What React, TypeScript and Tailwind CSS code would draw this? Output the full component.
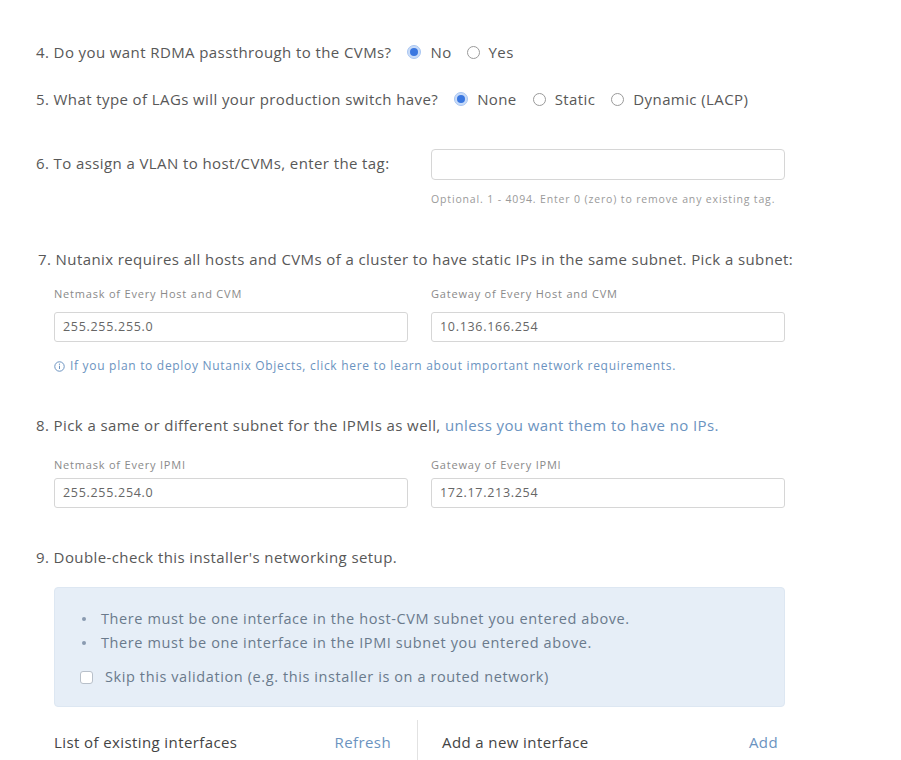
import React from "react";

const font = { fontFamily: "'Open Sans', Lato, Arial, sans-serif" };

function Radio({ checked, label }: { checked?: boolean; label: string }) {
  return (
    <span className="inline-flex items-center gap-[9px]">
      {checked ? (
        <span className="w-[14px] h-[14px] rounded-full bg-[#c9dcf8] border border-[#a9c6f2] flex items-center justify-center">
          <span className="w-[8px] h-[8px] rounded-full bg-[#3a77e0]" />
        </span>
      ) : (
        <span className="w-[13px] h-[13px] rounded-full border border-[#9a9a9a] bg-white" />
      )}
      <span>{label}</span>
    </span>
  );
}

function Field({ label }: { label: string }) {
  return (
    <div className="w-[354px]">
      <div className="text-[11px] leading-[14px] tracking-[0.8px] text-[#8a8a8a] h-[14px]">{label}</div>
    </div>
  );
}

function Input({ value }: { value: string }) {
  return (
    <div className="w-[354px] h-[30px] rounded-[3px] border border-[#d6d6d6] bg-white flex items-center pl-[8px] text-[12.5px] tracking-[0.7px] text-[#666]">
      {value}
    </div>
  );
}

export default function App() {
  return (
    <div className="w-[901px] h-[760px] bg-white overflow-hidden text-[#585858] tracking-[0.4px]" style={font}>
      <div className="pl-[36px]">
        <div className="pt-[42px] h-[62px] flex items-center gap-[16px] text-[15px] leading-[20px]">
          <span>4. Do you want RDMA passthrough to the CVMs?</span>
          <span className="flex items-center gap-[15px]">
            <Radio checked label="No" />
            <Radio label="Yes" />
          </span>
        </div>
        <div className="mt-[27px] flex items-center gap-[16px] text-[15px] leading-[20px]">
          <span>5. What type of LAGs will your production switch have?</span>
          <span className="flex items-center gap-[16px]">
            <Radio checked label="None" />
            <Radio label="Static" />
            <Radio label="Dynamic (LACP)" />
          </span>
        </div>
        <div className="mt-[40px] flex items-center text-[15px] leading-[20px]">
          <span className="w-[395px] -mt-[4px]">6. To assign a VLAN to host/CVMs, enter the tag:</span>
          <div className="w-[354px] h-[31px] rounded-[4px] border border-[#d6d6d6] bg-white" />
        </div>
        <div className="ml-[395px] mt-[12px] text-[10.5px] leading-[14px] tracking-[0.85px] text-[#9a9a9a]">
          Optional. 1 - 4094. Enter 0 (zero) to remove any existing tag.
        </div>

        <div className="mt-[43px] pl-[2px] text-[15px] leading-[20px]">
          7. Nutanix requires all hosts and CVMs of a cluster to have static IPs in the same subnet. Pick a subnet:
        </div>
        <div className="pl-[18px]">
          <div className="mt-[18px] flex gap-[23px]">
            <Field label="Netmask of Every Host and CVM" />
            <Field label="Gateway of Every Host and CVM" />
          </div>
          <div className="mt-[11px] flex gap-[23px]">
            <Input value="255.255.255.0" />
            <Input value="10.136.166.254" />
          </div>
          <div className="mt-[16px] flex items-center gap-[5px] text-[12px] leading-[16px] tracking-[0.7px] text-[#6b93c0]">
            <svg width="11" height="11" viewBox="0 0 10 10" className="shrink-0">
              <circle cx="5" cy="5" r="4.3" fill="none" stroke="#6b93c0" strokeWidth="0.9" />
              <line x1="5" y1="4.3" x2="5" y2="7.3" stroke="#6b93c0" strokeWidth="0.9" />
              <circle cx="5" cy="2.9" r="0.55" fill="#6b93c0" />
            </svg>
            <span>If you plan to deploy Nutanix Objects, click here to learn about important network requirements.</span>
          </div>
        </div>

        <div className="mt-[41px] text-[15px] leading-[20px]">
          8. Pick a same or different subnet for the IPMIs as well,{" "}
          <span className="text-[#6b93c0]">unless you want them to have no IPs.</span>
        </div>
        <div className="pl-[18px]">
          <div className="mt-[23px] flex gap-[23px]">
            <Field label="Netmask of Every IPMI" />
            <Field label="Gateway of Every IPMI" />
          </div>
          <div className="mt-[6px] flex gap-[23px]">
            <Input value="255.255.254.0" />
            <Input value="172.17.213.254" />
          </div>
        </div>

        <div className="mt-[39px] text-[15px] leading-[20px]">9. Double-check this installer's networking setup.</div>

        <div className="ml-[18px] mt-[20px] w-[731px] h-[120px] rounded-[4px] bg-[#e6eef7] border border-[#dde7f2] pl-[27px] pt-[21px] text-[14.5px] tracking-[0.6px] text-[#6a7a8c]">
          <ul className="flex flex-col gap-[4px]">
            <li className="flex items-center gap-[15px] leading-[20px]">
              <span className="w-[4px] h-[4px] rounded-full bg-[#8a9ab0]" />
              There must be one interface in the host-CVM subnet you entered above.
            </li>
            <li className="flex items-center gap-[15px] leading-[20px]">
              <span className="w-[4px] h-[4px] rounded-full bg-[#8a9ab0]" />
              There must be one interface in the IPMI subnet you entered above.
            </li>
          </ul>
          <div className="mt-[14px] flex items-center gap-[12px] leading-[20px] -ml-[2px]">
            <span className="w-[13px] h-[13px] rounded-[3px] border border-[#b8c0ca] bg-white" />
            Skip this validation (e.g. this installer is on a routed network)
          </div>
        </div>

        <div className="ml-[18px] mt-[13px] w-[724px] flex text-[15px]">
          <div className="w-[363px] h-[44px] flex items-center justify-between pr-[26px]">
            <span className="text-[#444]">List of existing interfaces</span>
            <span className="text-[#6b93c0]">Refresh</span>
          </div>
          <div className="flex-1 h-[44px] border-l border-[#e2e2e2] flex items-center justify-between pl-[24px]">
            <span className="text-[#444]">Add a new interface</span>
            <span className="text-[#6b93c0]">Add</span>
          </div>
        </div>
      </div>
    </div>
  );
}
